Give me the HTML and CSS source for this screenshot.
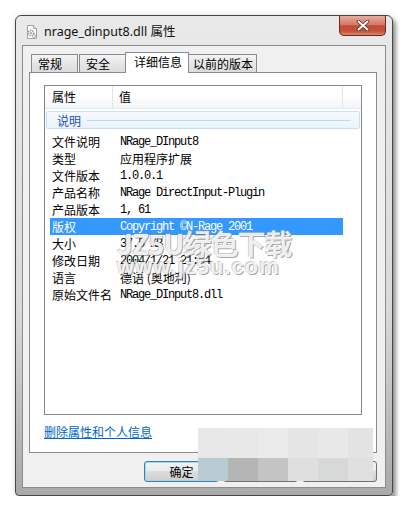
FILE: index.html
```html
<!DOCTYPE html>
<html>
<head>
    <meta charset="UTF-8">
    <title>nrage_dinput8.dll 属性</title>
    <link rel="stylesheet" href="styles.css">
</head>
<body>
    <div class="window">
        <div class="titlebar">
            <svg class="file-icon" width="16" height="16" viewBox="0 0 16 16">
                <path d="M3.5 1.5h6l3 3v10h-9z" fill="#fbfbfb" stroke="#9aa3ad"/>
                <path d="M9.5 1.5v3h3" fill="#e4e8ec" stroke="#9aa3ad"/>
                <circle cx="7" cy="9" r="2.6" fill="none" stroke="#8c96a3" stroke-width="1.6" stroke-dasharray="1.3 0.9"/>
                <circle cx="7" cy="9" r="0.9" fill="#8c96a3"/>
                <circle cx="10" cy="12" r="1.5" fill="none" stroke="#a4adb8" stroke-width="1"/>
            </svg>
            <span class="title">nrage_dinput8.dll 属性</span>
        </div>

        <div class="client">
            <div class="tabs">
                <div class="tab tab-general">常规</div>
                <div class="tab tab-security">安全</div>
                <div class="tab tab-details active">详细信息</div>
                <div class="tab tab-previous">以前的版本</div>
            </div>

            <div class="panel">
                <div class="list">
                    <div class="list-head">
                        <div class="hcol hcol-name">属性</div>
                        <div class="hcol hcol-value">值</div>
                        <div class="hcol hcol-rest"></div>
                    </div>
                    <div class="group"><span>说明</span><i></i></div>
                    <div class="row"><span class="k">文件说明</span><span class="v">NRage_DInput8</span></div>
                    <div class="row"><span class="k">类型</span><span class="v zh">应用程序扩展</span></div>
                    <div class="row"><span class="k">文件版本</span><span class="v">1.0.0.1</span></div>
                    <div class="row"><span class="k">产品名称</span><span class="v">NRage DirectInput-Plugin</span></div>
                    <div class="row"><span class="k">产品版本</span><span class="v">1, 61</span></div>
                    <div class="row selected"><span class="k">版权</span><span class="v">Copyright ©N-Rage 2001</span></div>
                    <div class="row"><span class="k">大小</span><span class="v">37.5 KB</span></div>
                    <div class="row"><span class="k">修改日期</span><span class="v">2004/1/21 21:54</span></div>
                    <div class="row"><span class="k">语言</span><span class="v zh">德语 (奥地利)</span></div>
                    <div class="row"><span class="k">原始文件名</span><span class="v">NRage_DInput8.dll</span></div>
                </div>
                <a class="remove-link" href="#">删除属性和个人信息</a>
            </div>

            <div class="buttons">
                <button class="btn default">确定</button>
                <button class="btn">取消</button>
                <button class="btn">应用(A)</button>
            </div>
        </div>
    </div>

    <!-- caption button drawn over the window frame -->
    <div class="caption-btn">
        <svg width="14" height="11" viewBox="0 0 14 11">
            <path d="M2.5 1.5l9 8M11.5 1.5l-9 8" stroke="#5a2a22" stroke-width="3.6" stroke-linecap="round"/>
            <path d="M2.5 1.5l9 8M11.5 1.5l-9 8" stroke="#fff" stroke-width="2" stroke-linecap="round"/>
        </svg>
    </div>

    <div class="watermark">
        <div class="wm-big">JZ5U绿色下载</div>
        <div class="wm-url">www.jz5u.com</div>
    </div>

    <div class="mosaic">
        <i style="background:#e7e7e7"></i><i style="background:#e8e8e8"></i><i style="background:#eaeaea"></i>
        <i style="background:#e5e5e5"></i><i style="background:#e8e8e8"></i><i style="background:#e3e3e3"></i>
        <i style="background:#b8cbd2"></i><i style="background:#b5b5b5"></i><i style="background:#c4c4c4"></i>
        <i style="background:#dfdfdf"></i><i style="background:#d7d8d8"></i><i style="background:#e0e0e0"></i>
    </div>
</body>
</html>
```

FILE: styles.css
```css
body {
    margin: 0;
    background: #fff;
    font-family: "Noto Sans CJK SC", sans-serif;
    font-size: 12px;
    color: #000;
}
.window {
    margin: 15px 0 0 15px;
    width: 378px;
    height: 481px;
    box-sizing: border-box;
    padding: 0 6px 7px 6px;
    border: 1px solid #474747;
    border-radius: 6px 6px 4px 4px;
    background: linear-gradient(#e9e9e9, #dadada 60%, #a9a9a9);
    box-shadow: 3px 4px 4px rgba(0, 0, 0, 0.4), 0 0 6px rgba(0, 0, 0, 0.12);
    display: flex;
    flex-direction: column;
}
.titlebar {
    height: 29px;
    flex: none;
    display: flex;
    align-items: flex-start;
}
.file-icon {
    margin: 8px 0 0 2px;
    flex: none;
}
.title {
    margin: 7px 0 0 4px;
    font-family: "Noto Sans", "Noto Sans CJK SC", sans-serif;
    font-size: 12.5px;
    line-height: 17px;
    color: #111;
}
.caption-btn {
    position: absolute;
    left: 339px;
    top: 16px;
    z-index: 10;
    width: 47px;
    height: 20px;
    box-sizing: border-box;
    border: 1px solid #6a2a20;
    border-top: 0;
    border-radius: 0 0 5px 5px;
    background-color: #c9553f;
    background-image: linear-gradient(#e7ab9e, #d57968 45%, #c24a34 52%, #c6533c 80%, #d9856c);
    display: flex;
    align-items: center;
    justify-content: center;
}
.client {
    height: 443px;
    flex: none;
    box-sizing: border-box;
    border: 1px solid #8c8c8c;
    background: #f0f0f0;
    padding: 6px 8px 0 6px;
    display: flex;
    flex-direction: column;
}
.tabs {
    height: 20px;
    display: flex;
    align-items: flex-end;
    margin-left: 2px;
    position: relative;
    z-index: 1;
}
.tab {
    height: 18px;
    box-sizing: border-box;
    padding-left: 6px;
    line-height: 17px;
    border: 1px solid #898c95;
    border-bottom: none;
    background: linear-gradient(#f4f4f4, #e6e6e6 50%, #dcdcdc);
}
.tab-general { width: 47px; margin-right: 1px; }
.tab-security { width: 46px; border-right: none; }
.tab-details { width: 64px; }
.tab-previous { width: 68px; border-left: none; padding-left: 4px; }
.tab.active {
    height: 21px;
    margin-bottom: -1px;
    padding-left: 8px;
    line-height: 18px;
    background: #fff;
}
.panel {
    width: 348px;
    height: 381px;
    box-sizing: border-box;
    border: 1px solid #898c95;
    background: #fff;
    padding: 12px 14px 0 14px;
}
.list {
    height: 330px;
    box-sizing: border-box;
    border: 1px solid #828790;
}
.list-head {
    height: 23px;
    display: flex;
    background: linear-gradient(#fff 45%, #f3f4f6);
    border-bottom: 1px solid #e8e9eb;
    box-sizing: border-box;
    line-height: 22px;
}
.hcol {
    border-right: 1px solid #e3e4e6;
}
.hcol-name { width: 68px; padding-left: 7px; box-sizing: border-box; }
.hcol-value { width: 230px; padding-left: 6px; box-sizing: border-box; }
.hcol-rest { flex: 1; border-right: none; }
.group {
    margin: 2px 1px 0 1px;
    height: 18px;
    box-sizing: border-box;
    border: 1px solid #cadef4;
    border-radius: 2px;
    background: linear-gradient(#f6faff, #eaf3fd);
    display: flex;
    align-items: center;
    padding-left: 10px;
    color: #1d4ebd;
}
.group i {
    flex: 1;
    height: 1px;
    margin: 1px 8px 0 6px;
    background: #c5d6ea;
}
.group + .row {
    margin-top: 4px;
}
.row {
    display: flex;
    align-items: center;
    height: 17px;
    margin-left: 5px;
    width: 293px;
}
.row .k {
    width: 68px;
    padding-left: 2px;
    flex: none;
}
.row .v {
    font-family: "Liberation Mono", monospace;
    font-size: 12px;
    letter-spacing: -1.2px;
}
.row .v.zh {
    font-family: "Noto Sans CJK SC", sans-serif;
    font-size: 12px;
    letter-spacing: 0;
}
.row.selected {
    background: #3399ff;
    color: #fff;
}
.remove-link {
    display: block;
    margin-top: 9px;
    line-height: 16px;
    color: #0066cc;
    width: max-content;
}
.buttons {
    width: 348px;
    margin-top: 8px;
    display: flex;
    justify-content: flex-end;
    gap: 4px;
}
.btn {
    width: 75px;
    height: 21px;
    padding: 0;
    font-family: "Noto Sans CJK SC", sans-serif;
    font-size: 12px;
    border: 1px solid #707070;
    border-radius: 3px;
    background: linear-gradient(#f2f2f2, #ebebeb 45%, #dddddd 50%, #cfcfcf);
}
.btn.default {
    border-color: #3c7fb1;
    box-shadow: inset 0 0 0 1px #9fd7f3;
}
.watermark {
    position: absolute;
    left: 117px;
    top: 226px;
    color: rgba(255, 255, 255, 0.85);
    font-weight: bold;
    text-shadow: 1px 1px 0 rgba(110, 110, 110, 0.6), -1px -1px 0 rgba(150, 150, 150, 0.5);
    pointer-events: none;
}
.wm-big {
    font-size: 28px;
    line-height: 34px;
    letter-spacing: -1px;
}
.wm-url {
    font-family: "Liberation Sans", sans-serif;
    font-size: 22px;
    line-height: 20px;
    letter-spacing: 1px;
    margin-top: -3px;
}
.mosaic {
    position: absolute;
    left: 198px;
    top: 428px;
    display: grid;
    grid-template-columns: repeat(5, 30px) 25px;
    grid-template-rows: 30px 23px;
}
```
